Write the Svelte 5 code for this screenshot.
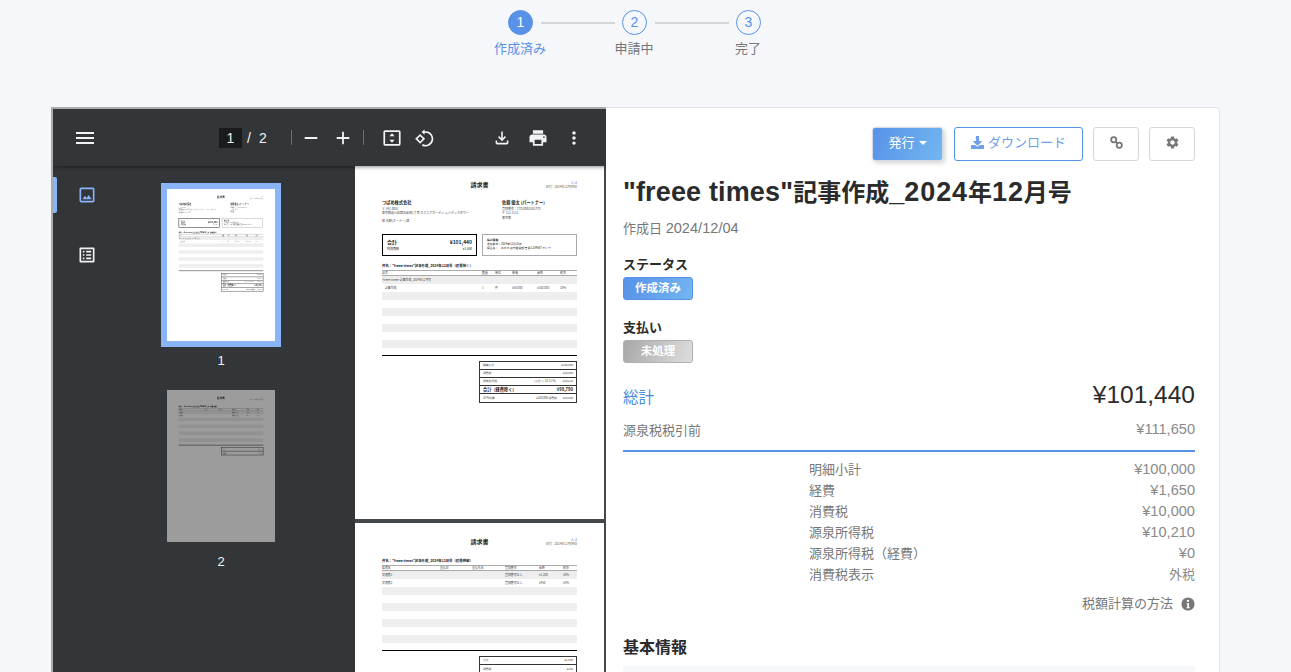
<script>
	const steps = [
		{ no: 1, label: '作成済み', done: true },
		{ no: 2, label: '申請中', done: false },
		{ no: 3, label: '完了', done: false }
	];
	const itemRows = [
		{ cells: ['"freee times"記事作成_2024年12月号', '', '', '', '', ''] },
		{ cells: ['　記事作成', '1', '件', '¥50,000', '¥100,000', '10%'] },
		...Array(7).fill({ cells: ['', '', '', '', '', ''] })
	];
	const costRows = [
		{ cells: ['交通費1', '', '', '登録番号なし', '¥1,200', '10%'] },
		{ cells: ['交通費2', '', '', '登録番号なし', '¥450', '10%'] },
		...Array(7).fill({ cells: ['', '', '', '', '', ''] })
	];
	const summaryOne = [
		{ label: '明細小計', mid: '', value: '¥100,000' },
		{ label: '消費税', mid: '', value: '¥10,000' },
		{ label: '源泉所得税', mid: '(小計 × 10.21 %)', value: '-¥10,210' },
		{ label: '合計（経費除く）', mid: '', value: '¥99,790', strong: true },
		{ label: '10 %対象', mid: '¥100,000 消費税', value: '¥10,000' }
	];
	const summaryTwo = [
		{ label: '小計', mid: '', value: '¥1,650' },
		{ label: '消費税', mid: '', value: '¥150' }
	];
	const breakdown = [
		['明細小計', '¥100,000'],
		['経費', '¥1,650'],
		['消費税', '¥10,000'],
		['源泉所得税', '¥10,210'],
		['源泉所得税（経費）', '¥0'],
		['消費税表示', '外税']
	];
</script>

{#snippet table(head, rows, cols)}
	<div class="doc-table {cols}">
		<div class="doc-row doc-head">
			{#each head as h}<span>{h}</span>{/each}
		</div>
		{#each rows as row}
			<div class="doc-row">
				{#each row.cells as c}<span>{c}</span>{/each}
			</div>
		{/each}
	</div>
	<div class="doc-rule"></div>
{/snippet}

{#snippet summary(rows)}
	<div class="doc-summary">
		{#each rows as r}
			<div class="sum-row" class:strong={r.strong}>
				<span>{r.label}</span><span class="sum-mid">{r.mid}</span><span>{r.value}</span>
			</div>
		{/each}
	</div>
{/snippet}

{#snippet pageOne()}
	<div class="doc">
		<div class="doc-top">
			<b class="doc-title">請求書</b>
			<div class="doc-meta"><div>1 / 2</div><div>日付：2024年12月04日</div></div>
		</div>
		<div class="doc-parties">
			<div>
				<b class="party">つばめ株式会社</b>
				<div class="line">〒 141-0031</div>
				<div class="line">東京都品川区西五反田1丁目 スクエアガーデン レジデンスタワー</div>
				<div class="line gap">担 水野(オーナー) 様</div>
			</div>
			<div>
				<b class="party">佐藤 優太 (パートナー)</b>
				<div class="line">登録番号：T7010001831770</div>
				<div class="line">〒 111-1111</div>
				<div class="line">東京都</div>
			</div>
		</div>
		<div class="doc-boxes">
			<div class="total-box">
				<div class="total-main"><b>合計</b><b>¥101,440</b></div>
				<div class="total-sub"><span>内消費税</span><span>¥1,650</span></div>
			</div>
			<div class="bank-box">
				<b>振込情報</b>
				<div>支払期日：2024年12月31日</div>
				<div>振込先：　みずほ 東京営業部 普通 1234567 サトウ</div>
			</div>
		</div>
		<b class="doc-subject">件名："freee times"記事作成_2024年12月号（経費除く）</b>
		{@render table(['品目', '数量', '単位', '単価', '金額', '税率'], itemRows, 'items')}
		{@render summary(summaryOne)}
	</div>
{/snippet}

{#snippet pageTwo()}
	<div class="doc">
		<div class="doc-top">
			<b class="doc-title">請求書</b>
			<div class="doc-meta"><div>2 / 2</div><div>日付：2024年12月04日</div></div>
		</div>
		<b class="doc-subject second">件名："freee times"記事作成_2024年12月号（経費明細）</b>
		{@render table(['経費名', '支払日', '支払先名', '登録番号', '金額', '税率'], costRows, 'costs')}
		{@render summary(summaryTwo)}
	</div>
{/snippet}

<div class="page">
	<div class="stepper">
		<div class="step-dots">
			{#each steps as s, i}
				<span class="dot" class:done={s.done}>{s.no}</span>
				{#if i < steps.length - 1}<span class="step-line"></span>{/if}
			{/each}
		</div>
		<div class="step-labels">
			{#each steps as s}
				<span class:done={s.done}>{s.label}</span>
			{/each}
		</div>
	</div>

	<div class="card">
		<div class="viewer">
			<div class="toolbar">
				<svg class="tb-menu" viewBox="0 0 24 24" width="24" height="24"><path d="M3 18h18v-2H3v2zm0-5h18v-2H3v2zm0-7v2h18V6H3z" /></svg>
				<div class="pager">
					<span class="page-no">1</span>
					<span class="slash">/</span>
					<span>2</span>
				</div>
				<span class="sep first"></span>
				<svg class="tb-minus" viewBox="0 0 24 24" width="24" height="24"><path d="M5 11h14v2H5z" /></svg>
				<svg class="tb-plus" viewBox="0 0 24 24" width="24" height="24"><path d="M19 13h-6v6h-2v-6H5v-2h6V5h2v6h6v2z" /></svg>
				<span class="sep"></span>
				<svg class="tb-fit" viewBox="0 0 24 24" width="24" height="24">
					<path d="M4 3h16a2 2 0 0 1 2 2v14a2 2 0 0 1-2 2H4a2 2 0 0 1-2-2V5a2 2 0 0 1 2-2zm0 2v14h16V5H4z" fill-rule="evenodd" />
					<path d="M12 6.5l3 3.6H9zM12 17.5l-3-3.6h6z" />
				</svg>
				<svg class="tb-rotate" viewBox="0 0 24 24" width="24" height="24">
					<path d="M7.5 7.3L1.7 13l5.8 5.8 5.8-5.8-5.8-5.7zM4.5 13l3-3 3 3-3 3-3-3z" fill-rule="evenodd" />
					<path d="M12.6 2v2.1A9 9 0 1 1 9.6 21l.8-1.9a7 7 0 1 0 2.2-13V8.2L9.2 5.1z" />
				</svg>
				<svg class="tb-down" viewBox="0 0 24 24" width="24" height="24"><path d="M18 15v3H6v-3H4v3c0 1.1.9 2 2 2h12c1.1 0 2-.9 2-2v-3h-2zm-1-4l-1.41-1.41L13 12.17V4h-2v8.17L8.41 9.59 7 11l5 5 5-5z" /></svg>
				<svg class="tb-print" viewBox="0 0 24 24" width="24" height="24"><path d="M19 8H5c-1.66 0-3 1.34-3 3v6h4v4h12v-4h4v-6c0-1.66-1.34-3-3-3zm-3 11H8v-5h8v5zm3-7c-.55 0-1-.45-1-1s.45-1 1-1 1 .45 1 1-.45 1-1 1zm-1-9H6v4h12V3z" /></svg>
				<svg class="tb-more" viewBox="0 0 24 24" width="24" height="24"><path d="M12 8c1.1 0 2-.9 2-2s-.9-2-2-2-2 .9-2 2 .9 2 2 2zm0 2c-1.1 0-2 .9-2 2s.9 2 2 2 2-.9 2-2-.9-2-2-2zm0 6c-1.1 0-2 .9-2 2s.9 2 2 2 2-.9 2-2-.9-2-2-2z" /></svg>
			</div>
			<div class="viewer-body">
				<div class="side-tabs">
					<span class="tab-mark"></span>
					<svg viewBox="0 0 24 24" width="20" height="20">
						<path fill="#8ab4f8" d="M19 3H5a2 2 0 0 0-2 2v14a2 2 0 0 0 2 2h14a2 2 0 0 0 2-2V5a2 2 0 0 0-2-2zm0 16H5V5h14v14zM6.5 17l3-4 2 2.5 2.5-3.5 3.5 5z" />
					</svg>
					<svg viewBox="0 0 24 24" width="20" height="20">
						<path fill="#f1f3f4" d="M19 5v14H5V5h14m1.1-2H3.9c-.5 0-.9.4-.9.9v16.2c0 .4.4.9.9.9h16.2c.4 0 .9-.5.9-.9V3.9c0-.5-.5-.9-.9-.9zM11 7h6v2h-6V7zm0 4h6v2h-6v-2zm0 4h6v2h-6zM7 7h2v2H7zm0 4h2v2H7zm0 4h2v2H7z" />
					</svg>
				</div>
				<div class="thumbs">
					<div class="thumb">
						<div class="thumb-frame active"><div class="thumb-page"><div class="scaled">{@render pageOne()}</div></div></div>
						<span class="thumb-no">1</span>
					</div>
					<div class="thumb">
						<div class="thumb-frame"><div class="thumb-page dim"><div class="scaled">{@render pageTwo()}</div></div></div>
						<span class="thumb-no">2</span>
					</div>
				</div>
				<div class="pages">
					<div class="sheet">{@render pageOne()}</div>
					<div class="sheet">{@render pageTwo()}</div>
				</div>
			</div>
		</div>

		<div class="details">
			<div class="actions">
				<button class="btn primary"><span class="btn-text">発行</span><span class="caret"></span></button>
				<button class="btn outline">
					<svg class="btn-icon" viewBox="0 0 512 512" width="13" height="13"><path fill="currentColor" d="M216 0h80c13 0 24 11 24 24v168h88c18 0 27 21 14 34L270 378c-8 8-20 8-28 0L90 226c-13-13-4-34 14-34h88V24c0-13 11-24 24-24zm296 376v112c0 13-11 24-24 24H24c-13 0-24-11-24-24V376c0-13 11-24 24-24h147l49 49c20 20 52 20 72 0l49-49h147c13 0 24 11 24 24z" /></svg>
					<span class="btn-text">ダウンロード</span>
				</button>
				<button class="btn plain" aria-label="リンク">
					<svg class="btn-icon" viewBox="0 0 16 16" width="13" height="13" fill="none" stroke="#777" stroke-width="2.2">
						<circle cx="4.6" cy="4.6" r="3.2" />
						<circle cx="11.4" cy="11.4" r="3.2" />
						<path d="M6.5 6.5l3 3" />
					</svg>
				</button>
				<button class="btn plain" aria-label="設定">
					<svg class="btn-icon" viewBox="0 0 24 24" width="15" height="15"><path fill="#777" d="M19.14 12.94c.04-.3.06-.61.06-.94 0-.32-.02-.64-.07-.94l2.03-1.58a.49.49 0 0 0 .12-.61l-1.92-3.32a.488.488 0 0 0-.59-.22l-2.39.96c-.5-.38-1.03-.7-1.62-.94l-.36-2.54a.484.484 0 0 0-.48-.41h-3.84c-.24 0-.43.17-.47.41l-.36 2.54c-.59.24-1.13.57-1.62.94l-2.39-.96c-.22-.08-.47 0-.59.22L2.74 8.87c-.12.21-.08.47.12.61l2.03 1.58c-.05.3-.09.63-.09.94s.02.64.07.94l-2.03 1.58a.49.49 0 0 0-.12.61l1.92 3.32c.12.22.37.29.59.22l2.39-.96c.5.38 1.03.7 1.62.94l.36 2.54c.05.24.24.41.48.41h3.84c.24 0 .44-.17.47-.41l.36-2.54c.59-.24 1.13-.56 1.62-.94l2.39.96c.22.08.47 0 .59-.22l1.92-3.32c.12-.22.07-.47-.12-.61l-2.01-1.58zM12 15.6c-1.98 0-3.6-1.62-3.6-3.6s1.62-3.6 3.6-3.6 3.6 1.62 3.6 3.6-1.62 3.6-3.6 3.6z" /></svg>
				</button>
			</div>

			<h1><span class="lat">"freee times"</span>記事作成<span class="lat">_</span><span class="lat digits">2024</span>年<span class="lat digits">12</span>月号</h1>
			<p class="created">作成日 <span class="num">2024/12/04</span></p>

			<h3 class="label status">ステータス</h3>
			<span class="badge blue">作成済み</span>
			<h3 class="label pay">支払い</h3>
			<span class="badge gray">未処理</span>

			<div class="total">
				<span class="total-label">総計</span>
				<span class="total-value">¥101,440</span>
			</div>
			<div class="pretax">
				<span>源泉税税引前</span>
				<span class="num muted">¥111,650</span>
			</div>

			<div class="breakdown">
				{#each breakdown as [name, value]}
					<div class="bd-row"><span>{name}</span><span class="muted" class:num={value !== '外税'}>{value}</span></div>
				{/each}
			</div>
			<div class="tax-help">
				税額計算の方法
				<svg viewBox="0 0 16 16" width="14" height="14">
					<circle cx="8" cy="8" r="7.5" fill="#777" />
					<circle cx="8" cy="4.4" r="1.4" fill="#fff" />
					<path d="M6.3 7h2.9v4.6h1v1.2H6.2v-1.2h1V8.2h-.9z" fill="#fff" />
				</svg>
			</div>

			<h2>基本情報</h2>
			<div class="info-bar"></div>
		</div>
	</div>
</div>

<style>
	:global(body) {
		margin: 0;
		background: #f5f7fb;
	}
	.page {
		height: 672px;
		overflow: hidden;
		font-family: 'Liberation Sans', 'Noto Sans CJK JP', sans-serif;
		color: #2b2b2b;
	}

	.stepper {
		height: 107px;
		box-sizing: border-box;
		padding-top: 10px;
	}
	.step-dots {
		display: flex;
		align-items: center;
		margin-left: 508px;
	}
	.dot {
		width: 25px;
		height: 25px;
		box-sizing: border-box;
		border: 1px solid #5792e8;
		border-radius: 50%;
		color: #5792e8;
		font-size: 14px;
		line-height: 23px;
		text-align: center;
		flex: none;
	}
	.dot.done {
		background: #5792e8;
		color: #fff;
	}
	.step-line {
		width: 74px;
		height: 2px;
		background: #d5d6d8;
		margin: 0 7px 0 8px;
		flex: none;
	}
	.step-labels {
		display: grid;
		grid-template-columns: repeat(3, 114px);
		margin: 5px 0 0 463px;
		font-size: 13px;
		line-height: 18px;
		color: #777;
		text-align: center;
	}
	.step-labels .done {
		color: #5792e8;
	}

	.card {
		display: flex;
		width: 1169px;
		height: 600px;
		margin-left: 51px;
		background: #fff;
		border: 1px solid #e3e4e6;
		border-radius: 4px;
		box-sizing: border-box;
	}

	.viewer {
		width: 555px;
		flex: none;
		background: #323639;
		border-top: 2px solid #aaa;
		border-left: 2px solid #aaa;
		margin: -1px 0 0 -1px;
		display: flex;
		flex-direction: column;
		overflow: hidden;
		box-sizing: border-box;
	}
	.toolbar {
		height: 57px;
		flex: none;
		display: flex;
		align-items: center;
		background: #323639;
		box-shadow: 0 1px 4px rgba(0, 0, 0, 0.45);
		position: relative;
		z-index: 2;
		color: #f1f3f4;
		font-size: 14px;
	}
	.toolbar svg {
		fill: #f1f3f4;
		flex: none;
	}
	.tb-menu { margin-left: 20px; }
	.pager {
		display: flex;
		align-items: center;
		margin-left: 122px;
		gap: 5px;
	}
	.page-no {
		width: 23px;
		height: 20px;
		background: #191b1c;
		line-height: 20px;
		text-align: center;
	}
	.slash { margin-right: 3px; }
	.sep {
		width: 1px;
		height: 15px;
		background: #6b6e71;
	}
	.sep.first { margin-left: 24px; }
	.tb-minus { margin-left: 7px; transform: scale(0.9); }
	.tb-plus { margin-left: 8px; transform: scale(0.9); }
	.tb-plus + .sep { margin-left: 8px; }
	.tb-fit { margin-left: 16px; transform: scale(0.86); }
	.tb-rotate { margin-left: 8px; transform: scale(0.86); }
	.tb-down { margin-left: 54px; transform: scale(0.8); }
	.tb-print { margin-left: 12px; transform: scale(0.85); }
	.tb-more { margin-left: 12px; transform: scale(0.85); }

	.viewer-body {
		flex: 1;
		display: flex;
		min-height: 0;
	}
	.side-tabs {
		width: 68px;
		flex: none;
		position: relative;
		display: flex;
		flex-direction: column;
		align-items: center;
		gap: 40px;
		padding-top: 19px;
		box-sizing: border-box;
	}
	.tab-mark {
		position: absolute;
		left: 0;
		top: 11px;
		width: 4px;
		height: 36px;
		background: #8ab4f8;
		border-radius: 0 2px 2px 0;
	}
	.thumbs {
		width: 234px;
		flex: none;
		display: flex;
		flex-direction: column;
		align-items: center;
		padding-top: 17px;
		box-sizing: border-box;
	}
	.thumb {
		display: flex;
		flex-direction: column;
		align-items: center;
		margin-bottom: 14px;
		margin-left: -34px;
	}
	.thumb-frame {
		padding: 6px;
	}
	.thumb-frame.active {
		background: #8ab4f8;
	}
	.thumb-page {
		width: 108px;
		height: 152px;
		background: #fff;
		overflow: hidden;
	}
	.thumb-page.dim {
		filter: brightness(0.61);
	}
	.scaled {
		width: 250px;
		transform: scale(0.432);
		transform-origin: 0 0;
	}
	.thumb-no {
		font-size: 13px;
		color: #f1f3f4;
		line-height: 18px;
		margin-top: 5px;
	}

	.pages {
		width: 251px;
		flex: none;
		background: #45484b;
		display: flex;
		flex-direction: column;
		gap: 4px;
	}
	.sheet {
		width: 249px;
		height: 353px;
		background: #fff;
		flex: none;
	}

	.doc {
		height: 353px;
		box-sizing: border-box;
		padding: 15px 27px 0 27px;
		font-size: 3.4px;
		line-height: 4.4px;
		font-family: 'Noto Sans CJK JP', sans-serif;
		color: #222;
		overflow: hidden;
	}
	.doc-top {
		display: flex;
		justify-content: center;
		position: relative;
		height: 16px;
	}
	.doc-title {
		font-size: 6px;
		line-height: 8px;
	}
	.doc-meta {
		position: absolute;
		right: 0;
		top: 0;
		text-align: right;
		color: #555;
		font-size: 3px;
	}
	.doc-parties {
		display: grid;
		grid-template-columns: 120px 1fr;
		height: 36px;
		margin-top: 2px;
	}
	.party {
		display: block;
		font-size: 4.2px;
		line-height: 7px;
		margin-bottom: 1px;
	}
	.line { color: #444; font-size: 3px; }
	.line.gap { margin-top: 3px; }
	.doc-boxes {
		display: grid;
		grid-template-columns: 95px 95px;
		gap: 5px;
		height: 22px;
		margin-top: -1px;
	}
	.total-box {
		border: 1px solid #000;
		padding: 3px 4px;
		box-sizing: border-box;
	}
	.total-main {
		display: flex;
		justify-content: space-between;
		font-size: 5px;
		line-height: 7px;
	}
	.total-sub {
		display: flex;
		justify-content: space-between;
		font-size: 3px;
		margin-top: 1.5px;
	}
	.bank-box {
		border: 1px solid #aaa;
		padding: 3px 4px;
		box-sizing: border-box;
		font-size: 2.8px;
		line-height: 4.2px;
		white-space: nowrap;
	}
	.doc-subject {
		display: block;
		margin-top: 7px;
		line-height: 5px;
		white-space: nowrap;
	}
	.doc-subject.second { margin-top: 4px; }
	.doc-table {
		margin-top: 2px;
	}
	.doc-row {
		display: grid;
		height: 8px;
		align-items: center;
		font-size: 2.9px;
		color: #444;
		white-space: nowrap;
	}
	.items .doc-row { grid-template-columns: 100px 13px 17px 25px 23px 17px; }
	.costs .doc-row { grid-template-columns: 58px 32px 33px 34px 24px 14px; }
	.doc-row:nth-child(even) {
		background: #eee;
	}
	.doc-row.doc-head {
		height: 4px;
		border-top: 1px solid #aaa;
		border-bottom: 1px solid #aaa;
	}
	.doc-rule {
		height: 1px;
		background: #000;
		margin-top: 7px;
	}
	.doc-summary {
		width: 98px;
		margin: 5px 0 0 auto;
		border: 1px solid #333;
		box-sizing: border-box;
	}
	.sum-row {
		display: flex;
		justify-content: space-between;
		height: 8px;
		padding: 0 3px;
		align-items: center;
		border-bottom: 1px solid #333;
		box-sizing: border-box;
		font-size: 2.8px;
		color: #444;
	}
	.sum-row:last-child { border-bottom: 0; }
	.sum-row.strong {
		font-size: 4.2px;
		font-weight: 700;
		color: #222;
	}
	.sum-mid { margin-left: auto; margin-right: 6px; }

	.details {
		flex: 1;
		min-width: 0;
		padding: 19px 24px 0 17px;
	}
	.actions {
		display: flex;
		justify-content: flex-end;
		gap: 10px;
	}
	.btn {
		height: 34px;
		box-sizing: border-box;
		border-radius: 3px;
		font-family: inherit;
		font-size: 13px;
		padding: 0;
		background: #fff;
		display: flex;
		align-items: center;
		justify-content: center;
	}
	.btn-text {
		position: relative;
		top: -3px;
	}
	.btn-icon {
		position: relative;
		top: -2px;
	}
	.primary {
		width: 71px;
		margin-right: 1px;
		border: 1px solid #d5dbe5;
		color: #fff;
		background: linear-gradient(110deg, #5792e8, #72b6f0);
		box-shadow: 2px 2px 5px rgba(0, 0, 0, 0.18);
	}
	.caret {
		border: 4px solid transparent;
		border-top-color: #fff;
		border-bottom: 0;
		margin: -2px 0 0 4px;
	}
	.outline {
		width: 129px;
		border: 1px solid #5792e8;
		color: #6f9fe8;
		gap: 4px;
	}
	.plain {
		width: 46px;
		border: 1px solid #d5d6d8;
	}

	h1 {
		margin: 17px 0 0;
		font-size: 24px;
		line-height: 29px;
		font-weight: 700;
		white-space: nowrap;
		height: 29px;
	}
	.lat {
		font-size: 27px;
		line-height: 29px;
		letter-spacing: 0.15px;
	}
	.digits { letter-spacing: 0.9px; }
	.created {
		margin: 12px 0 0;
		font-size: 13px;
		line-height: 18px;
		color: #777;
	}
	.num {
		font-size: 14.6px;
	}
	.label {
		margin: 0;
		font-size: 13px;
		font-weight: 700;
		line-height: 20px;
	}
	.label.status { margin-top: 17px; }
	.label.pay { margin-top: 18px; }
	.badge {
		display: block;
		width: 70px;
		height: 23px;
		box-sizing: border-box;
		border-radius: 3px;
		color: #fff;
		font-size: 11.5px;
		font-weight: 700;
		line-height: 21px;
		text-align: center;
		margin-top: 2px;
	}
	.badge.blue {
		background: linear-gradient(110deg, #5792e8, #72b6f0);
		border: 1px solid #5792e8;
	}
	.badge.gray {
		background: linear-gradient(110deg, #a8a8a8, #dedede);
		border: 1px solid #b0b0b0;
	}
	.total {
		display: flex;
		justify-content: space-between;
		align-items: center;
		margin-top: 17px;
		height: 32px;
	}
	.total-label {
		color: #4a90e2;
		font-size: 15.5px;
	}
	.total-value {
		font-size: 24.5px;
		color: #2b2b2b;
		margin-bottom: 2px;
	}
	.pretax {
		display: flex;
		justify-content: space-between;
		align-items: center;
		font-size: 13px;
		height: 18px;
		color: #777;
		margin-top: 8px;
		padding-bottom: 12px;
		border-bottom: 2px solid #5792e8;
	}
	.muted { color: #8a8a8a; }
	.breakdown {
		margin: 6px 0 0 186px;
	}
	.bd-row {
		display: flex;
		justify-content: space-between;
		align-items: center;
		font-size: 13px;
		height: 21px;
		color: #777;
	}
	.tax-help {
		display: flex;
		justify-content: flex-end;
		align-items: center;
		gap: 8px;
		font-size: 13px;
		line-height: 18px;
		color: #777;
		margin-top: 11px;
	}
	h2 {
		margin: 24px 0 0;
		font-size: 16px;
		font-weight: 700;
		line-height: 22px;
	}
	.info-bar {
		height: 40px;
		margin-top: 7px;
		background: #f5f7fb;
	}
</style>
